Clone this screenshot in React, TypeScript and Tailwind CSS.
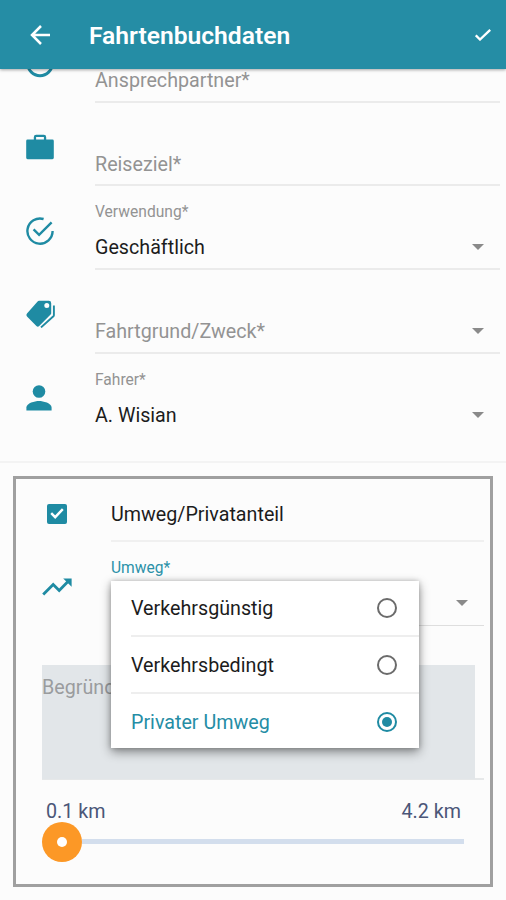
import clsx from 'clsx';
import React, { useState } from 'react';

interface FieldRowProps {
  icon: React.ReactNode;
  label?: string;
  value?: string;
  placeholder?: string;
  select?: boolean;
  last?: boolean;
}

const DETOUR_OPTIONS = [
  'Verkehrsgünstig',
  'Verkehrsbedingt',
  'Privater Umweg',
] as const;

const Caret: React.FC = () => (
  <svg className="h-[6px] w-[12px] fill-[#8a8a8a]" viewBox="0 0 12 6">
    <path d="M0 0h12L6 6z" />
  </svg>
);

const ContactIcon: React.FC = () => (
  <svg className="size-[32px]" viewBox="0 0 24 24" fill="none">
    <circle cx="12" cy="11.6" r="9.2" stroke="#1f8ba3" strokeWidth="2.2" />
  </svg>
);

const BriefcaseIcon: React.FC = () => (
  <svg className="h-[26px] w-[28px] fill-[#1f8ba3]" viewBox="0 0 28 26">
    <path d="M1.6 5.6h6.2V3.2A2.4 2.4 0 0 1 10.2.8h7.6a2.4 2.4 0 0 1 2.4 2.4v2.4h6.2a1.4 1.4 0 0 1 1.4 1.4v16.8a1.4 1.4 0 0 1-1.4 1.4H1.6a1.4 1.4 0 0 1-1.4-1.4V7a1.4 1.4 0 0 1 1.4-1.4zm8.5 0h7.8V3h-7.8z" />
  </svg>
);

const CheckCircleIcon: React.FC = () => (
  <svg
    className="size-[28px]"
    viewBox="0 0 28 28"
    fill="none"
    stroke="#1f8ba3"
    strokeWidth="2.4"
  >
    <path d="M17.6 2A12.6 12.6 0 1 0 26.6 14" />
    <path d="M7.6 12.4l5.5 5.5L25.6 5.4" />
  </svg>
);

const TagsIcon: React.FC = () => (
  <svg className="-mt-[1px] h-[28px] w-[30px]" viewBox="0 0 30 28">
    <path
      fill="#1f8ba3"
      fillRule="evenodd"
      d="M14 .8h9.8a2.4 2.4 0 0 1 2.4 2.4v10a2 2 0 0 1-.6 1.4L14.2 26a2 2 0 0 1-2.8 0L2 16.4a2 2 0 0 1 0-2.8L12.6 1.4A2 2 0 0 1 14 .8zM21.8 3a2.5 2.5 0 1 0 0 5 2.5 2.5 0 0 0 0-5z"
    />
    <path
      fill="none"
      stroke="#1f8ba3"
      strokeWidth="1.9"
      d="M28.9 5.5v9.6a1.6 1.6 0 0 1-.5 1.1L16 27.4"
    />
  </svg>
);

const PersonIcon: React.FC = () => (
  <svg className="-ml-[2px] h-[26px] w-[26px] fill-[#1f8ba3]" viewBox="0 0 26 26">
    <circle cx="13" cy="6.5" r="6.3" />
    <path d="M.4 25.6v-3.2c0-4.2 8.4-6.4 12.6-6.4s12.6 2.2 12.6 6.4v3.2z" />
  </svg>
);

const TrendIcon: React.FC = () => (
  <svg className="h-[18px] w-[30px]" viewBox="0 0 30 18">
    <path
      fill="none"
      stroke="#1f8ba3"
      strokeWidth="2.8"
      d="M1.2 16.6l10-10.2 6 6L26 3.4"
    />
    <path fill="#1f8ba3" d="M21.2.4h8.4v8.4z" />
  </svg>
);

const FieldRow: React.FC<FieldRowProps> = ({
  icon,
  label,
  value,
  placeholder,
  select,
  last,
}) => (
  <div
    className={clsx('flex shrink-0 pr-[6px]', last ? 'h-[107px]' : 'h-[83.7px]')}
  >
    <div className="flex h-[89px] w-[80px] items-center justify-center">
      {icon}
    </div>
    <div
      className={clsx(
        'ml-[15px] flex flex-1 flex-col',
        !last && 'border-b-2 border-[#ebebeb]'
      )}
    >
      <div className="mt-[15px] h-[22px] text-[15.6px] leading-[22px] text-[#939393]">
        {label}
      </div>
      <div className="mt-[10px] flex h-[28px] items-center justify-between pr-[16px] text-[19.7px] leading-[28px]">
        {value ? (
          <span className="pt-[2px] text-[#1c1c1c]">{value}</span>
        ) : (
          <span className="pt-[2px] text-[#939393]">{placeholder}</span>
        )}
        {select && <Caret />}
      </div>
    </div>
  </div>
);

const Radio: React.FC<{ checked: boolean }> = ({ checked }) => (
  <span
    className={clsx(
      'flex size-[20px] items-center justify-center rounded-full border-2',
      checked ? 'border-[#1f8ba3]' : 'border-[#6b6b6b]'
    )}
  >
    {checked && <span className="size-[10px] rounded-full bg-[#1f8ba3]" />}
  </span>
);

export default function App() {
  const [detour, setDetour] = useState<string>('Privater Umweg');

  return (
    <div className="flex h-[900px] w-[506px] flex-col overflow-hidden bg-[#fcfcfc] font-['Roboto',sans-serif]">
      <header className="relative z-10 flex h-[69px] shrink-0 items-center bg-[#258da5] pr-[15px] pl-[30px] shadow-[0_1px_3px_rgba(0,0,0,0.35)]">
        <svg
          className="mt-[1px] h-[20px] w-[20px]"
          viewBox="0 0 20 20"
          fill="none"
          stroke="#fff"
          strokeWidth="2.5"
        >
          <path d="M20 10H2M11 1l-9 9 9 9" />
        </svg>
        <h1 className="mt-[3px] ml-[39px] flex-1 text-[24.6px] font-semibold text-white">
          Fahrtenbuchdaten
        </h1>
        <svg
          className="h-[12px] w-[16px]"
          viewBox="0 0 16 12"
          fill="none"
          stroke="#fff"
          strokeWidth="2.3"
        >
          <path d="M.8 6.3L5 10.5 15.2.8" />
        </svg>
      </header>

      {/* First row is scrolled partly under the app bar */}
      <main className="-mt-[50px] flex shrink-0 flex-col">
        <FieldRow icon={<ContactIcon />} placeholder="Ansprechpartner*" />
        <FieldRow icon={<BriefcaseIcon />} placeholder="Reiseziel*" />
        <FieldRow
          icon={<CheckCircleIcon />}
          label="Verwendung*"
          value="Geschäftlich"
          select
        />
        <FieldRow icon={<TagsIcon />} placeholder="Fahrtgrund/Zweck*" select />
        <FieldRow
          icon={<PersonIcon />}
          label="Fahrer*"
          value="A. Wisian"
          select
          last
        />
      </main>

      <div className="h-[2px] shrink-0 bg-[#f3f3f3]" />

      {/* Detour section */}
      <section className="mt-[13px] ml-[13px] flex h-[411px] w-[480px] shrink-0 flex-col border-[3px] border-[#a0a0a0]">
        <div className="flex h-[63px] pr-[6px]">
          <div className="flex w-[82px] items-center justify-center pt-[7px]">
            <span className="flex size-[20px] items-center justify-center rounded-[2px] bg-[#1f8ba3]">
              <svg
                className="h-[11px] w-[14px]"
                viewBox="0 0 14 11"
                fill="none"
                stroke="#fff"
                strokeWidth="2.4"
              >
                <path d="M1.2 5.2l4 4L12.8 1.2" />
              </svg>
            </span>
          </div>
          <div className="ml-[13px] flex flex-1 items-center border-b-2 border-[#f0f0f0] pt-[11px] text-[19.7px] text-[#1c1c1c]">
            Umweg/Privatanteil
          </div>
        </div>

        <div className="flex h-[84px] pr-[6px]">
          <div className="flex w-[82px] items-center justify-center pt-[7px]">
            <TrendIcon />
          </div>
          <div className="relative ml-[13px] flex flex-1 flex-col border-b border-[#dedede]">
            <div className="mt-[15px] h-[22px] text-[15.6px] leading-[22px] text-[#2b91a8]">
              Umweg*
            </div>
            <div className="mt-[10px] flex h-[28px] items-center justify-end pr-[16px]">
              <Caret />
            </div>

            <ul className="absolute top-[39px] left-0 z-20 w-[308px] bg-white pl-[20px] shadow-[0_4px_10px_rgba(0,0,0,0.42),0_0_5px_rgba(0,0,0,0.2)]">
              {DETOUR_OPTIONS.map((option, idx) => (
                <li
                  key={option}
                  onClick={() => setDetour(option)}
                  className={clsx(
                    'flex items-center justify-between pr-[22px] text-[19.7px]',
                    idx < DETOUR_OPTIONS.length - 1
                      ? 'h-[56.5px] border-b-2 border-[#eeeeee]'
                      : 'h-[54px] pt-[2px]',
                    option === detour ? 'text-[#258da5]' : 'text-[#1c1c1c]'
                  )}
                >
                  <span className="pt-[2px]">{option}</span>
                  <Radio checked={option === detour} />
                </li>
              ))}
            </ul>
          </div>
        </div>

        <div className="mt-[39px] mr-[6px] ml-[26px] h-[115px] border-b-2 border-[#e6e8e9]">
          <div className="mr-[9px] h-[114px] bg-[#e2e6e9] pt-[9px] text-[19.7px] leading-[28px] text-[#9a9c9e]">
            Begründung*
          </div>
        </div>

        <div className="mt-[17px] mr-[29px] ml-[30px] flex justify-between text-[19.7px] leading-[30px] text-[#4b5678]">
          <span>0.1 km</span>
          <span>4.2 km</span>
        </div>
        <div className="-mt-[5px] mr-[26px] ml-[26px] flex h-[40px] items-center">
          <span className="flex size-[40px] items-center justify-center rounded-full bg-[#fc9826]">
            <span className="size-[10px] rounded-full bg-white" />
          </span>
          <span className="h-[5px] flex-1 bg-[#d3deed]" />
        </div>
      </section>
    </div>
  );
}
